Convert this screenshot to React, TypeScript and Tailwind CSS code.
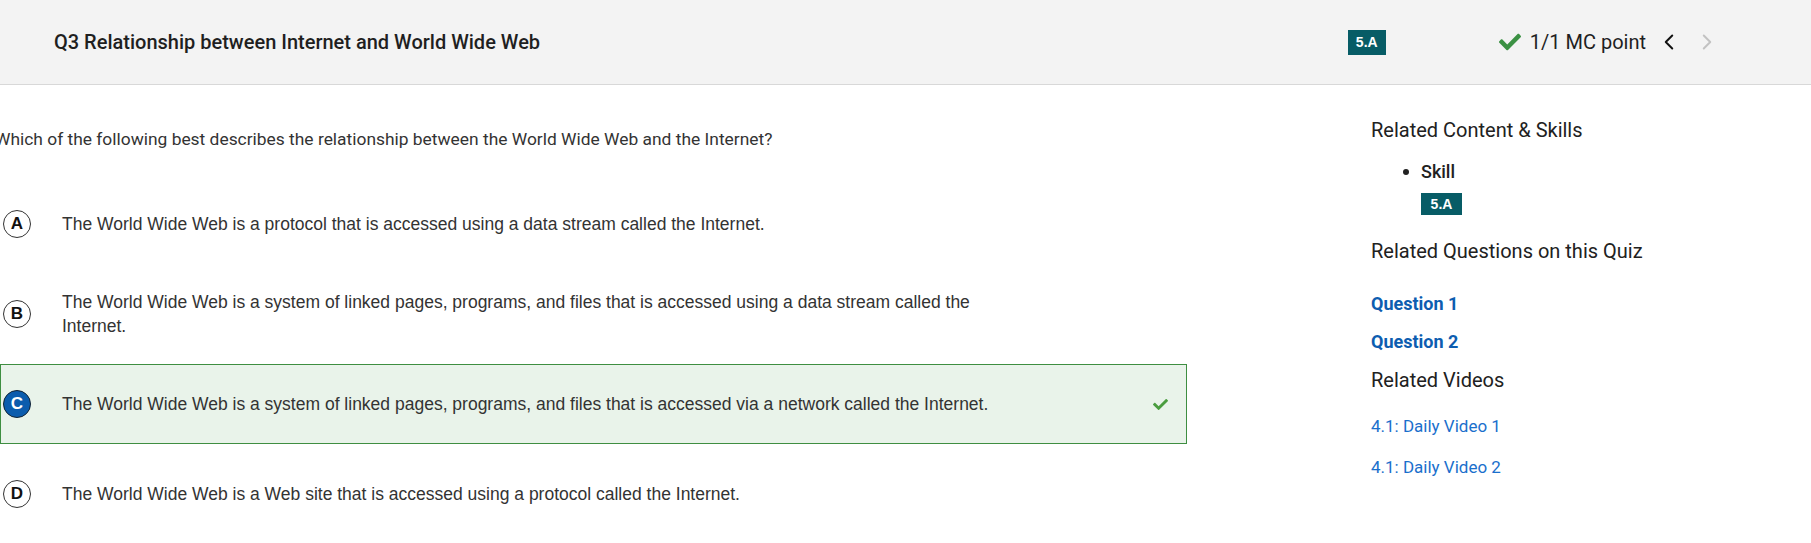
import React from 'react';
import { FaCheck } from 'react-icons/fa';
import { ChevronLeft, ChevronRight } from 'lucide-react';

interface Choice {
  letter: string;
  text: string;
  correct?: boolean;
}

const choices: Choice[] = [
  { letter: 'A', text: 'The World Wide Web is a protocol that is accessed using a data stream called the Internet.' },
  {
    letter: 'B',
    text: 'The World Wide Web is a system of linked pages, programs, and files that is accessed using a data stream called the Internet.',
  },
  {
    letter: 'C',
    text: 'The World Wide Web is a system of linked pages, programs, and files that is accessed via a network called the Internet.',
    correct: true,
  },
  { letter: 'D', text: 'The World Wide Web is a Web site that is accessed using a protocol called the Internet.' },
];

const SkillBadge: React.FC<{ className?: string }> = ({ className = '' }) => (
  <span
    className={`inline-flex items-center justify-center bg-[#075c66] text-white font-bold text-[14px] font-['Liberation_Sans',Arial,sans-serif] ${className}`}
  >
    5.A
  </span>
);

const ChoiceRow: React.FC<{ choice: Choice }> = ({ choice }) => {
  const boxClass = choice.correct
    ? 'bg-[#e9f3ea] border border-[#3e8e41]'
    : 'border border-transparent';

  return (
    <div className={`h-[80px] flex items-center ${boxClass}`}>
      <span
        className={`ml-[2px] w-[28px] h-[28px] shrink-0 rounded-full border flex items-center justify-center font-bold text-[17px] font-['Liberation_Sans',Arial,sans-serif] ${
          choice.correct ? 'bg-[#0b5cad] border-[#123] text-white' : 'border-[#333] text-[#111]'
        }`}
      >
        {choice.letter}
      </span>
      <p className="ml-[31px] max-w-[950px] text-[17.5px] leading-[24px] text-[#333] font-['Liberation_Sans',Arial,sans-serif]">
        {choice.text}
      </p>
      {choice.correct && (
        <FaCheck className="ml-auto mr-[18px] text-[#4a9d3f]" size={15} />
      )}
    </div>
  );
};

export default function App() {
  return (
    <div className="w-[1811px] h-[543px] bg-white overflow-hidden font-['Roboto',sans-serif] text-[#212121]">
      {/* Header bar */}
      <header className="h-[85px] bg-[#f3f3f3] border-b border-[#d8d8d8] flex items-center pl-[54px] pr-[91px]">
        <h1 className="flex-1 text-[20px] font-medium text-[#1f1f1f]">
          Q3 Relationship between Internet and World Wide Web
        </h1>
        <SkillBadge className="w-[38px] h-[25px]" />
        <div className="ml-[113px] flex items-center">
          <FaCheck className="text-[#3b9143]" size={22} />
          <span className="ml-[9px] text-[20px] text-[#1f1f1f]">1/1 MC point</span>
          <ChevronLeft className="ml-[10px] text-[#111]" size={26} strokeWidth={1.8} />
          <ChevronRight className="ml-[12px] text-[#c2c2c2]" size={26} strokeWidth={1.8} />
        </div>
      </header>

      <div className="flex">
        {/* Question + choices */}
        <main className="w-[1187px] shrink-0">
          <p className="mt-[42px] ml-[-5px] text-[17.4px] leading-[24px] text-[#333]">
            Which of the following best describes the relationship between the World Wide Web and the Internet?
          </p>
          <div className="mt-[33px] flex flex-col gap-[10px]">
            {choices.map((c) => (
              <ChoiceRow key={c.letter} choice={c} />
            ))}
          </div>
        </main>

        {/* Sidebar */}
        <aside className="ml-[184px] pt-[32px]">
          <h2 className="text-[20px] leading-[26px]">Related Content &amp; Skills</h2>
          <ul className="mt-[17px] ml-[50px]">
            <li className="relative text-[18px] leading-[24px] font-medium">
              <span className="absolute left-[-18px] top-[9px] w-[6px] h-[6px] rounded-full bg-[#222]" />
              Skill
            </li>
          </ul>
          <SkillBadge className="mt-[9px] ml-[50px] w-[41px] h-[22px]" />
          <h2 className="mt-[22px] text-[20px] leading-[26px]">Related Questions on this Quiz</h2>
          <div className="mt-[28px] text-[18px] leading-[24px] font-bold text-[#0d5db0]">Question 1</div>
          <div className="mt-[14px] text-[18px] leading-[24px] font-bold text-[#0d5db0]">Question 2</div>
          <h2 className="mt-[13px] text-[20px] leading-[26px]">Related Videos</h2>
          <div className="mt-[21px] text-[17px] leading-[24px] text-[#1a6fcc]">4.1: Daily Video 1</div>
          <div className="mt-[17px] text-[17px] leading-[24px] text-[#1a6fcc]">4.1: Daily Video 2</div>
        </aside>
      </div>
    </div>
  );
}
